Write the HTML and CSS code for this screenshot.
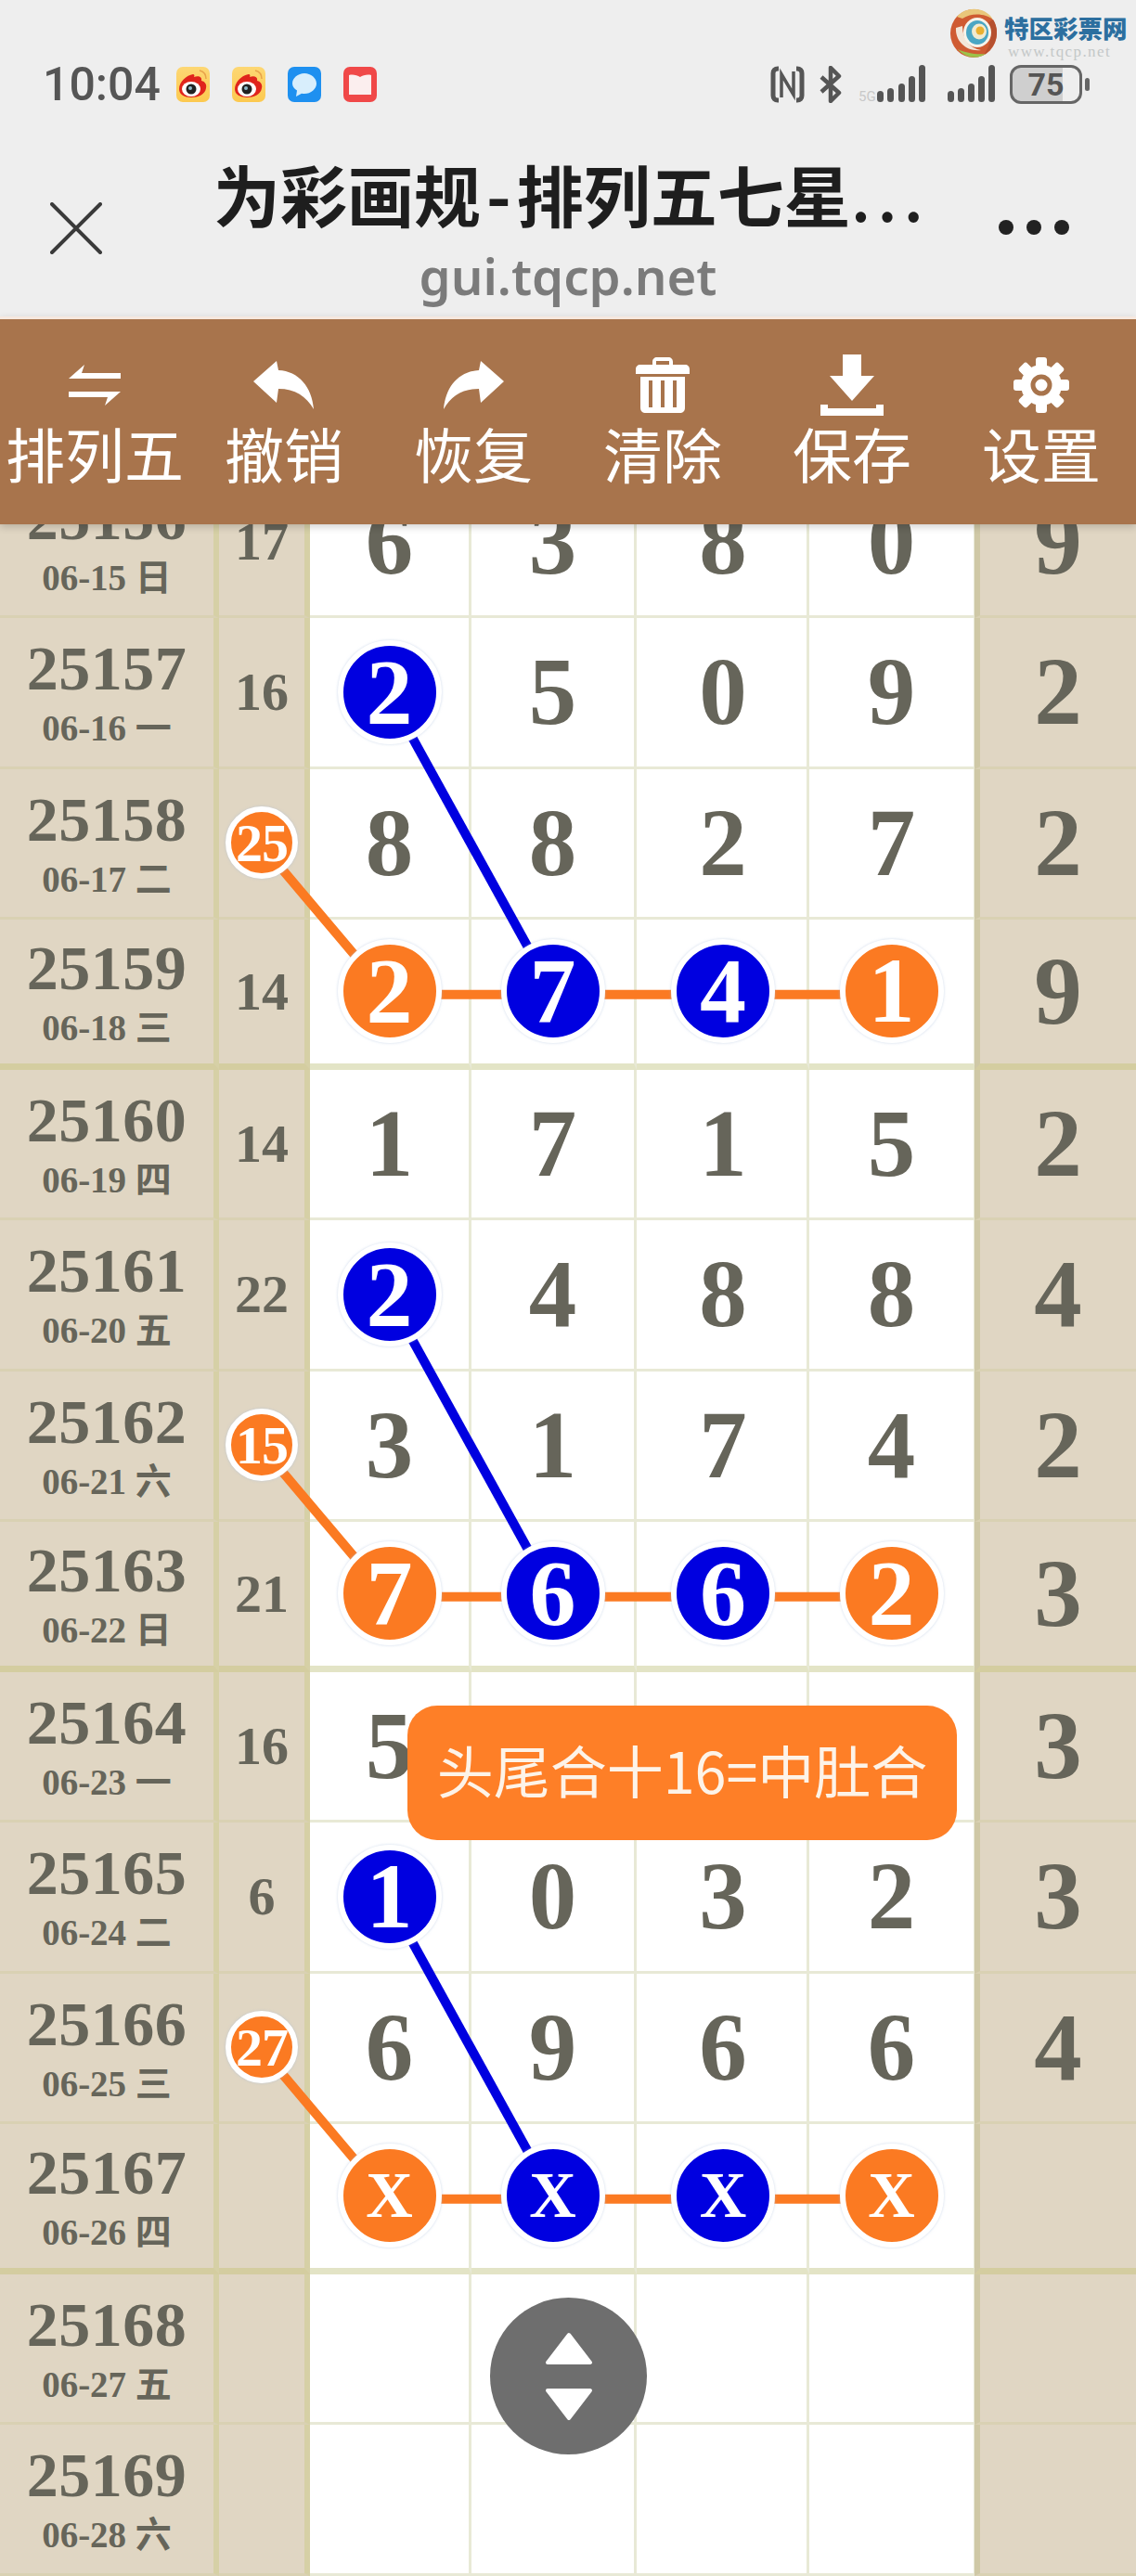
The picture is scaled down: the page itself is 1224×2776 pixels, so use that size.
FILE: index.html
```html
<!DOCTYPE html>
<html lang="zh-CN">
    <head>
        <meta charset="UTF-8">
        <meta name="viewport" content="width=device-width, initial-scale=1.0">
        <title>为彩画规-排列五七星</title>
        <link rel="stylesheet" href="styles.css">
    </head>
    <body>
        <svg class="defs" width="0" height="0">
            <defs>
                <linearGradient id="weibo-bg" x1="0" y1="0" x2="0" y2="1">
                    <stop offset="0" stop-color="#fdd774"/>
                    <stop offset="1" stop-color="#fcc94f"/>
                </linearGradient>
                <symbol id="weibo" viewBox="0 0 36 38">
                    <rect width="36" height="38" rx="7" fill="url(#weibo-bg)"/>
                    <path d="M3 24c0-8 8-15 15-16 1 0 2 1 1 3 5-2 9 0 8 4 4 1 6 4 5 8-1 7-9 10-16 10S3 30 3 24z" fill="#e0241c"/>
                    <ellipse cx="16" cy="24" rx="10" ry="8" fill="#fff"/>
                    <circle cx="16" cy="24" r="5.500" fill="#222"/>
                    <circle cx="15" cy="23" r="2" fill="#8fb8c8"/>
                    <path d="M25 4c4 1 7 4 7 9" fill="none" stroke="#e8a24a" stroke-width="1.500"/>
                </symbol>
            </defs>
        </svg>

        <header class="top">
            <div class="watermark">
                <svg class="wm-logo" width="50" height="54" viewBox="0 0 50 54">
                    <ellipse cx="25" cy="27" rx="25" ry="26" fill="#cf5b32"/>
                    <path d="M7 9C17-3 38-2 46 12 38 6 24 4 13 11z" fill="#e9c67a"/>
                    <path d="M46 12c8 12 4 30-10 38 8-10 10-26 4-34z" fill="#b5502f"/>
                    <path d="M8 44c8 10 22 11 30 5-10 1-22-1-30-5z" fill="#9cc24a"/>
                    <path d="M6 21c-1 15 12 26 27 24-12-2-20-11-20-26z" fill="#f3e6d8"/>
                    <ellipse cx="29" cy="26" rx="15" ry="16" fill="#f6f3ea"/>
                    <ellipse cx="29" cy="26" rx="12" ry="13" fill="#4aa6c4"/>
                    <ellipse cx="31" cy="25" rx="8" ry="8.500" fill="#f1ead0"/>
                    <circle cx="32" cy="24" r="4.500" fill="#eab030"/>
                </svg>
                <div class="wm-text">
                    <div class="wm-name">特区彩票网</div>
                    <div class="wm-url">www.tqcp.net</div>
                </div>
            </div>

            <div class="status">
                <div class="status-left">
                    <span class="time">10:04</span>
                    <svg class="app" width="36" height="38"><use href="#weibo"/></svg>
                    <svg class="app" width="36" height="38"><use href="#weibo"/></svg>
                    <svg class="app" width="36" height="38" viewBox="0 0 36 38">
                        <rect width="36" height="38" rx="7" fill="#1e90f0"/>
                        <path d="M18 7c7 0 13 5 13 11s-6 11-13 11c-1 0-2 0-3-.2L9 32l1-6.500C7 23.500 5 21 5 18 5 12 11 7 18 7z" fill="#d8eefc"/>
                    </svg>
                    <svg class="app" width="36" height="38" viewBox="0 0 36 38">
                        <rect width="36" height="38" rx="7" fill="#f04848"/>
                        <path d="M6 9c4-1 9 0 12 2 3-2 8-3 12-2v21H6z" fill="#fbeeee"/>
                    </svg>
                </div>
                <div class="status-right">
                    <svg width="37" height="40" viewBox="0 0 37 40">
                        <path d="M9 3H8C5 3 3 5 3 8v24c0 3 2 5 5 5h1M28 3h1c3 0 5 2 5 5v24c0 3-2 5-5 5h-1" fill="none" stroke="#555" stroke-width="5"/>
                        <path d="M12 34V9l13 22V6" fill="none" stroke="#555" stroke-width="3.500"/>
                    </svg>
                    <svg class="bt" width="26" height="40" viewBox="0 0 26 40">
                        <path d="M3 12l19 17-9 9V2l9 9L3 28" fill="none" stroke="#555" stroke-width="4.500" stroke-linejoin="round"/>
                    </svg>
                    <svg class="sig-a" width="72" height="42" viewBox="0 0 72 42">
                        <text class="sig-label" x="0" y="39">5G</text>
                        <rect x="20" y="28" width="7" height="12" rx="3.500" fill="#555"/>
                        <rect x="31" y="25" width="7" height="15" rx="3.500" fill="#555"/>
                        <rect x="43" y="20" width="7" height="20" rx="3.500" fill="#555"/>
                        <rect x="54" y="12" width="7" height="28" rx="3.500" fill="#555"/>
                        <rect x="65" y="0" width="7" height="40" rx="3.500" fill="#555"/>
                    </svg>
                    <svg class="sig-b" width="51" height="42" viewBox="0 0 51 42">
                        <rect x="0" y="28" width="7" height="12" rx="3.500" fill="#555"/>
                        <rect x="11" y="25" width="7" height="15" rx="3.500" fill="#555"/>
                        <rect x="22" y="20" width="7" height="20" rx="3.500" fill="#555"/>
                        <rect x="33" y="12" width="7" height="28" rx="3.500" fill="#555"/>
                        <rect x="44" y="0" width="7" height="40" rx="3.500" fill="#555"/>
                    </svg>
                    <div class="battery"><span class="battery-num">75</span></div>
                    <div class="battery-nub"></div>
                </div>
            </div>

            <div class="nav">
                <svg class="close" width="56" height="56" viewBox="0 0 56 56">
                    <path d="M2 2l52 52M54 2L2 54" stroke="#3a3a3a" stroke-width="4" stroke-linecap="round"/>
                </svg>
                <div class="nav-title">
                    <div class="title">为彩画规<span class="title-dash">-</span>排列五七星<span class="title-dots">...</span></div>
                    <div class="url">gui.tqcp.net</div>
                </div>
                <div class="more"><i></i><i></i><i></i></div>
            </div>
        </header>

        <div class="toolbar">
            <div class="tool">
                <div class="tool-icon">
                    <svg width="56" height="44" viewBox="0 0 56 44">
                        <path d="M0 15L17 0l-3 9h42v6zM0 29h56v0l-17 15 3-9H0z" fill="#fff"/>
                    </svg>
                </div>
                <span>排列五</span>
            </div>
            <div class="tool">
                <div class="tool-icon">
                    <svg width="66" height="52" viewBox="0 0 66 52">
                        <path d="M0 22L25 0l2 10c22 1 36 18 38 42-8-14-20-22-38-22l-2 15z" fill="#fff"/>
                    </svg>
                </div>
                <span>撤销</span>
            </div>
            <div class="tool">
                <div class="tool-icon">
                    <svg width="66" height="52" viewBox="0 0 66 52">
                        <path d="M66 22L41 0l-2 10C17 11 3 28 1 52c8-14 20-22 38-22l2 15z" fill="#fff"/>
                    </svg>
                </div>
                <span>恢复</span>
            </div>
            <div class="tool">
                <div class="tool-icon">
                    <svg width="58" height="60" viewBox="0 0 58 60">
                        <path d="M18 8V5c0-3 2-5 5-5h12c3 0 5 2 5 5v3h13c3 0 5 2 5 5v5H0v-5c0-3 2-5 5-5zm4 0h14V4H22z" fill="#fff" fill-rule="evenodd"/>
                        <path d="M5 21h48v33c0 4-2 6-6 6H11c-4 0-6-2-6-6z" fill="#fff"/>
                        <path d="M16 25v29M29 25v29M42 25v29" stroke="#a8744c" stroke-width="4"/>
                    </svg>
                </div>
                <span>清除</span>
            </div>
            <div class="tool">
                <div class="tool-icon">
                    <svg width="68" height="66" viewBox="0 0 68 66">
                        <path d="M24 0h20v23h14L34 50 10 23h14z" fill="#fff"/>
                        <path d="M0 54h8v4h52v-4h8v12H0z" fill="#fff"/>
                    </svg>
                </div>
                <span>保存</span>
            </div>
            <div class="tool">
                <div class="tool-icon">
                    <svg width="62" height="60" viewBox="-31 -30 62 60">
                        <g fill="#fff">
                            <rect x="-6" y="-30" width="12" height="60" rx="3"/>
                            <rect x="-6" y="-30" width="12" height="60" rx="3" transform="rotate(45)"/>
                            <rect x="-6" y="-30" width="12" height="60" rx="3" transform="rotate(90)"/>
                            <rect x="-6" y="-30" width="12" height="60" rx="3" transform="rotate(135)"/>
                            <circle r="22"/>
                        </g>
                        <circle r="9" fill="#fff" stroke="#a8744c" stroke-width="5"/>
                    </svg>
                </div>
                <span>设置</span>
            </div>
        </div>

        <main class="chart">
            <svg class="links" width="1224" height="2272" viewBox="0 0 1224 2272">
                <!-- 第一组 -->
                <path class="link-o" d="M281 405.500L418 567.750H960"/>
                <path class="link-b" d="M418 243.250L597 567.750"/>
                <!-- 第二组 -->
                <path class="link-o" d="M281 1054.500L418 1216.750H960"/>
                <path class="link-b" d="M418 892.250L597 1216.750"/>
                <!-- 第三组 -->
                <path class="link-o" d="M281 1703.500L418 1865.750H960"/>
                <path class="link-b" d="M418 1541.250L597 1865.750"/>
            </svg>

            <div class="row">
                <div class="issue"><b>25156</b><small>06-15 日</small></div>
                <div class="sum">17</div>
                <div class="num">6</div><div class="num">3</div><div class="num">8</div><div class="num">0</div>
                <div class="last">9</div>
            </div>
            <div class="row">
                <div class="issue"><b>25157</b><small>06-16 一</small></div>
                <div class="sum">16</div>
                <div class="num"><span class="ball blue">2</span></div><div class="num">5</div><div class="num">0</div><div class="num">9</div>
                <div class="last">2</div>
            </div>
            <div class="row">
                <div class="issue"><b>25158</b><small>06-17 二</small></div>
                <div class="sum"><span class="mini">25</span></div>
                <div class="num">8</div><div class="num">8</div><div class="num">2</div><div class="num">7</div>
                <div class="last">2</div>
            </div>
            <div class="row thick">
                <div class="issue"><b>25159</b><small>06-18 三</small></div>
                <div class="sum">14</div>
                <div class="num"><span class="ball orange">2</span></div><div class="num"><span class="ball blue">7</span></div><div class="num"><span class="ball blue">4</span></div><div class="num"><span class="ball orange">1</span></div>
                <div class="last">9</div>
            </div>

            <div class="row">
                <div class="issue"><b>25160</b><small>06-19 四</small></div>
                <div class="sum">14</div>
                <div class="num">1</div><div class="num">7</div><div class="num">1</div><div class="num">5</div>
                <div class="last">2</div>
            </div>
            <div class="row">
                <div class="issue"><b>25161</b><small>06-20 五</small></div>
                <div class="sum">22</div>
                <div class="num"><span class="ball blue">2</span></div><div class="num">4</div><div class="num">8</div><div class="num">8</div>
                <div class="last">4</div>
            </div>
            <div class="row">
                <div class="issue"><b>25162</b><small>06-21 六</small></div>
                <div class="sum"><span class="mini">15</span></div>
                <div class="num">3</div><div class="num">1</div><div class="num">7</div><div class="num">4</div>
                <div class="last">2</div>
            </div>
            <div class="row thick">
                <div class="issue"><b>25163</b><small>06-22 日</small></div>
                <div class="sum">21</div>
                <div class="num"><span class="ball orange">7</span></div><div class="num"><span class="ball blue">6</span></div><div class="num"><span class="ball blue">6</span></div><div class="num"><span class="ball orange">2</span></div>
                <div class="last">3</div>
            </div>

            <div class="row">
                <div class="issue"><b>25164</b><small>06-23 一</small></div>
                <div class="sum">16</div>
                <div class="num">5</div><div class="num"></div><div class="num"></div><div class="num"></div>
                <div class="last">3</div>
            </div>
            <div class="row">
                <div class="issue"><b>25165</b><small>06-24 二</small></div>
                <div class="sum">6</div>
                <div class="num"><span class="ball blue">1</span></div><div class="num">0</div><div class="num">3</div><div class="num">2</div>
                <div class="last">3</div>
            </div>
            <div class="row">
                <div class="issue"><b>25166</b><small>06-25 三</small></div>
                <div class="sum"><span class="mini">27</span></div>
                <div class="num">6</div><div class="num">9</div><div class="num">6</div><div class="num">6</div>
                <div class="last">4</div>
            </div>
            <div class="row thick">
                <div class="issue"><b>25167</b><small>06-26 四</small></div>
                <div class="sum"></div>
                <div class="num"><span class="ball orange ball-x">X</span></div><div class="num"><span class="ball blue ball-x">X</span></div><div class="num"><span class="ball blue ball-x">X</span></div><div class="num"><span class="ball orange ball-x">X</span></div>
                <div class="last"></div>
            </div>

            <div class="row">
                <div class="issue"><b>25168</b><small>06-27 五</small></div>
                <div class="sum"></div>
                <div class="num"></div><div class="num"></div><div class="num"></div><div class="num"></div>
                <div class="last"></div>
            </div>
            <div class="row">
                <div class="issue"><b>25169</b><small>06-28 六</small></div>
                <div class="sum"></div>
                <div class="num"></div><div class="num"></div><div class="num"></div><div class="num"></div>
                <div class="last"></div>
            </div>
        </main>

        <div class="tip">头尾合十16=中肚合</div>

        <div class="updown">
            <svg width="52" height="96" viewBox="0 0 52 96">
                <path d="M26 3L49 33H3z" fill="#fff" stroke="#fff" stroke-width="4" stroke-linejoin="round"/>
                <path d="M26 93L49 63H3z" fill="#fff" stroke="#fff" stroke-width="4" stroke-linejoin="round"/>
            </svg>
        </div>
    </body>
</html>
```

FILE: styles.css
```css
*{
    margin: 0;
    padding: 0;
    box-sizing: border-box;
}

html, body{
    width: 1224px;
    height: 2776px;
    overflow: hidden;
    background: #fff;
}

body{
    position: relative;
    font-family: "Noto Sans CJK SC", sans-serif;
}

.defs{
    position: absolute;
}

/* 顶部 */
.top{
    position: relative;
    height: 341px;
    padding-top: 70px;
    background: #eeeeee;
}

.watermark{
    position: absolute;
    top: 9px;
    left: 1024px;
    display: flex;
    gap: 8px;
}

.wm-name{
    font-size: 26.500px;
    line-height: 30px;
    margin-top: 6px;
    font-weight: 900;
    color: #2c6f9f;
}

.wm-url{
    font-family: "Liberation Serif", serif;
    font-size: 17px;
    line-height: 18px;
    margin-top: 2px;
    margin-left: 4px;
    letter-spacing: 1.400px;
    color: #c4c8c8;
}

.status{
    display: flex;
    justify-content: space-between;
    height: 42px;
    padding-left: 46px;
    padding-right: 50px;
}

.status-left, .status-right{
    display: flex;
    align-items: center;
}

.time{
    font-family: Roboto, sans-serif;
    font-weight: 500;
    font-size: 50px;
    line-height: 44px;
    color: #555;
    margin-right: 17px;
}

.app{
    margin-right: 24px;
}

.bt{
    margin-left: 15px;
}

.sig-a{
    margin-left: 17px;
}

.sig-label{
    font-family: Roboto, sans-serif;
    font-size: 15px;
    fill: #c8c8c8;
}

.sig-b{
    margin-left: 24px;
}

.battery{
    width: 78px;
    height: 42px;
    margin-left: 16px;
    border: 3px solid #666;
    border-radius: 12px;
    background: linear-gradient(90deg, #cfcfcf 75%, #eee 75%);
    display: flex;
    align-items: center;
    justify-content: center;
}

.battery-num{
    font-family: Roboto, sans-serif;
    font-weight: 700;
    font-size: 34px;
    color: #555;
}

.battery-nub{
    width: 5px;
    height: 14px;
    margin-left: 3px;
    border-radius: 3px;
    background: #666;
}

.nav{
    display: grid;
    grid-template-columns: 200px 1fr 200px;
    padding-top: 51px;
}

.close{
    margin-top: 55px;
    margin-left: 54px;
}

.nav-title{
    text-align: center;
    margin-left: 22px;
    margin-right: 26px;
}

.title{
    font-size: 72px;
    font-weight: 700;
    line-height: 90px;
    color: #1e1e1e;
    white-space: nowrap;
    padding-left: 8px;
}

.title-dash{
    margin: 0 6px;
}

.title-dots{
    letter-spacing: 7px;
    font-weight: 500;
}

.url{
    font-family: "Noto Sans", sans-serif;
    font-weight: 600;
    font-size: 54.500px;
    line-height: 70px;
    margin-top: 9px;
    color: #7b7b7b;
}

.more{
    display: flex;
    gap: 14px;
    margin-top: 74px;
    margin-left: 48px;
}

.more i{
    width: 16px;
    height: 16px;
    border-radius: 50%;
    background: #222;
}

/* 工具栏 */
.toolbar{
    position: relative;
    z-index: 5;
    display: flex;
    height: 224px;
    padding-top: 38px;
    border-top: 3px solid #f6e8df;
    background: #a8744c;
    box-shadow: 0 3px 8px rgba(0,0,0,0.18);
}

.tool{
    flex: 1;
    display: flex;
    flex-direction: column;
    align-items: center;
    color: #fff;
}

.tool-icon{
    height: 66px;
    display: flex;
    align-items: center;
}

.tool span{
    font-size: 64px;
    line-height: 78px;
    white-space: nowrap;
}

/* 走势表 */
.chart{
    position: relative;
    margin-top: -61px;
    font-family: "Liberation Serif", "Noto Sans CJK SC", serif;
    font-weight: 700;
    color: #66655a;
}

.links{
    position: absolute;
    top: 0;
    left: 0;
    z-index: 1;
}

.link-o, .link-b{
    fill: none;
    stroke-width: 10px;
}

.link-o{
    stroke: #fb7a22;
}

.link-b{
    stroke: #0000e0;
}

.row{
    display: grid;
    grid-template-columns: 236px 98px 174px 178px 186px 180px 172px;
    height: 162.250px;
}

.row > div{
    display: flex;
    align-items: center;
    justify-content: center;
    border-bottom: 3px solid #e8e9d6;
    border-right: 3px solid #e8e9d6;
}

.row.thick > div{
    border-bottom: 7px solid #e3e4c6;
}

.row > .issue, .row > .sum, .row > .last{
    background: #e0d6c3;
    border-bottom-color: #d9d1b3;
}

.row.thick > .issue, .row.thick > .sum, .row.thick > .last{
    border-bottom-color: #d4cda0;
}

.row > .issue, .row > .sum{
    border-right: 6px solid #d6d0a6;
}

.row > .last{
    border-right: none;
    border-left: 6px solid #cfc8a6;
    margin-left: -2px;
    font-size: 103px;
    line-height: 1;
}

.row > .num:nth-child(5){
    padding-left: 3px;
}

.row > .num:nth-child(7){
    border-right: none;
    padding-right: 4px;
}

.issue{
    flex-direction: column;
    padding-top: 4px;
}

.issue b{
    font-size: 68px;
    line-height: 70px;
    letter-spacing: 0.500px;
}

.issue small{
    font-size: 39px;
    line-height: 50px;
    margin-top: 5px;
}

.sum{
    font-size: 58px;
}

.num{
    font-size: 103px;
    line-height: 1;
}

.ball, .mini{
    position: relative;
    z-index: 2;
    display: flex;
    align-items: center;
    justify-content: center;
    border-radius: 50%;
    color: #fff;
    box-shadow: 0 0 3px rgba(170,190,220,0.6);
}

.ball{
    width: 112px;
    height: 112px;
    border: 6px solid #fff;
    font-size: 100px;
}

.ball.orange{
    background: #fb7a22;
}

.ball.blue{
    background: #0000e0;
}

.ball.ball-x{
    font-size: 70px;
}

.mini{
    width: 78px;
    height: 78px;
    border: 6px solid #fff;
    background: #fb7a22;
    font-size: 58px;
    letter-spacing: -1px;
}

/* 提示 */
.tip{
    position: absolute;
    top: 1838px;
    left: 439px;
    width: 592px;
    height: 145px;
    z-index: 6;
    display: flex;
    align-items: center;
    justify-content: center;
    padding-bottom: 8px;
    border-radius: 32px;
    background: #fe7f27;
    color: #fdf3e8;
    font-family: "Noto Sans CJK SC", sans-serif;
    font-size: 61px;
    white-space: nowrap;
}

.updown{
    position: absolute;
    top: 2476px;
    left: 528px;
    width: 169px;
    height: 169px;
    z-index: 6;
    display: flex;
    align-items: center;
    justify-content: center;
    border-radius: 50%;
    background: #6e6e6e;
}
```
